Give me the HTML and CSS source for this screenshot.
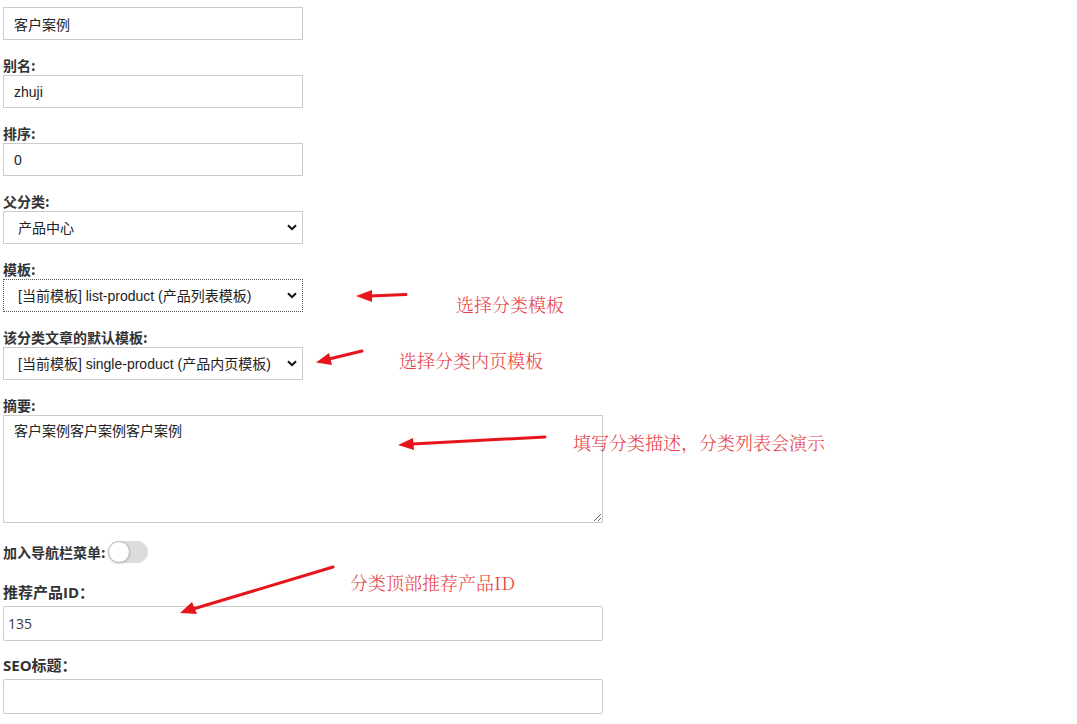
FILE: index.html
```html
<!DOCTYPE html>
<html lang="zh">
<head>
<meta charset="utf-8">
<link rel="stylesheet" href="styles.css">
</head>
<body>
<div class="page">
  <form class="form">
    <input class="field" type="text" value="客户案例">
    <label class="lbl">别名:</label>
    <input class="field" type="text" value="zhuji">
    <label class="lbl">排序:</label>
    <input class="field" type="text" value="0">
    <label class="lbl">父分类:</label>
    <div class="sel-wrap">
      <select class="sel"><option>产品中心</option></select>
      <svg class="chev" width="10" height="7" viewBox="0 0 10 7"><path d="M1 1.2 L5 5.2 L9 1.2" fill="none" stroke="#111" stroke-width="2"/></svg>
    </div>
    <label class="lbl">模板:</label>
    <div class="sel-wrap">
      <select class="sel focus"><option>[当前模板] list-product (产品列表模板)</option></select>
      <svg class="chev" width="10" height="7" viewBox="0 0 10 7"><path d="M1 1.2 L5 5.2 L9 1.2" fill="none" stroke="#111" stroke-width="2"/></svg>
    </div>
    <label class="lbl">该分类文章的默认模板:</label>
    <div class="sel-wrap">
      <select class="sel"><option>[当前模板] single-product (产品内页模板)</option></select>
      <svg class="chev" width="10" height="7" viewBox="0 0 10 7"><path d="M1 1.2 L5 5.2 L9 1.2" fill="none" stroke="#111" stroke-width="2"/></svg>
    </div>
    <label class="lbl">摘要:</label>
    <textarea class="area">客户案例客户案例客户案例</textarea>
    <div class="toggle-row">
      <span class="lbl inline">加入导航栏菜单:</span>
      <span class="toggle"><span class="knob"></span></span>
    </div>
    <label class="lbl2">推荐产品ID：</label>
    <input class="field2" type="text" value="135">
    <label class="lbl2">SEO标题：</label>
    <input class="field2" type="text" value="">
  </form>

  <div class="note n1">选择分类模板</div>
  <div class="note n2">选择分类内页模板</div>
  <div class="note n3">填写分类描述，分类列表会演示</div>
  <div class="note n4">分类顶部推荐产品ID</div>

  <svg class="arrows" width="1077" height="724" viewBox="0 0 1077 724">
    <g stroke="#e8141b" stroke-width="3" fill="#e8141b" stroke-linecap="round">
      <line x1="406" y1="294.5" x2="370" y2="296"/>
      <polygon points="356,296 372,290 372,302" stroke="none"/>
      <line x1="362" y1="351" x2="329" y2="359"/>
      <polygon points="316,362.5 329,353 332,365" stroke="none"/>
      <line x1="545" y1="437" x2="412" y2="444"/>
      <polygon points="398,445 413,438 414,450" stroke="none"/>
      <line x1="333" y1="567" x2="193" y2="609"/>
      <polygon points="180,613 192,602 197,614" stroke="none"/>
    </g>
  </svg>
</div>
</body>
</html>
```

FILE: styles.css
```css
html, body {
  margin: 0;
  padding: 0;
  background: #fff;
}
.page {
  position: relative;
  width: 1077px;
  height: 724px;
  overflow: hidden;
  font-family: "Noto Sans CJK SC", "Liberation Sans", sans-serif;
  color: #222;
}
.form {
  display: flex;
  flex-direction: column;
  align-items: flex-start;
  padding: 7px 0 0 3px;
}
.field {
  box-sizing: border-box;
  width: 300px;
  height: 33px;
  margin: 0 0 16px 0;
  padding: 0 10px;
  border: 1px solid #cbcbcb;
  font-family: "Liberation Sans", "Noto Sans CJK SC", sans-serif;
  font-size: 14px;
  color: #222;
  background: #fff;
  outline: none;
}
.lbl {
  display: block;
  height: 19px;
  line-height: 19px;
  font-size: 14px;
  font-weight: 700;
  color: #333;
}
.lbl.inline {
  display: inline-block;
  height: auto;
  margin-right: 2px;
}
.sel-wrap {
  position: relative;
  width: 300px;
  height: 33px;
  margin: 0 0 16px 0;
}
.sel {
  box-sizing: border-box;
  width: 300px;
  height: 33px;
  margin: 0;
  padding: 0 0 0 14px;
  border: 1px solid #cbcbcb;
  background: #fff;
  font-family: "Liberation Sans", "Noto Sans CJK SC", sans-serif;
  font-size: 14px;
  color: #222;
  appearance: none;
  -webkit-appearance: none;
  border-radius: 0;
  outline: none;
}
.sel.focus {
  border: 1px dotted #555;
}
.chev {
  position: absolute;
  right: 6px;
  top: 13px;
}
.area {
  box-sizing: border-box;
  width: 600px;
  height: 108px;
  margin: 0;
  padding: 5px 10px;
  border: 1px solid #cbcbcb;
  font-family: "Noto Sans CJK SC", sans-serif;
  font-size: 14px;
  line-height: 18px;
  color: #222;
  resize: both;
  outline: none;
}
.toggle-row {
  display: flex;
  align-items: center;
  height: 22px;
  margin: 18px 0 0 0;
}
.toggle {
  position: relative;
  display: inline-block;
  width: 40px;
  height: 22px;
  border-radius: 11px;
  background: #dcdcdc;
}
.knob {
  position: absolute;
  left: 0;
  top: 0;
  box-sizing: border-box;
  width: 22px;
  height: 22px;
  border-radius: 50%;
  background: #fff;
  border: 1px solid #bdbdbd;
  box-shadow: 0 1px 2px rgba(0,0,0,0.15);
}
.lbl2 {
  display: block;
  margin-top: 19px;
  height: 21px;
  line-height: 21px;
  font-family: "Open Sans", "Noto Sans CJK SC", sans-serif;
  font-size: 15px;
  font-weight: 700;
  color: #333;
}
.field2 {
  box-sizing: border-box;
  width: 600px;
  height: 35px;
  margin: 3px 0 0 0;
  padding: 0 4px;
  border: 1px solid #cbcbcb;
  border-radius: 2px;
  font-family: "Open Sans", sans-serif;
  font-weight: 400;
  font-size: 14px;
  color: #3a3a3a;
  outline: none;
}
.field2 + .lbl2 { margin-top: 14px; }
.note {
  position: absolute;
  font-family: "Noto Serif CJK SC", "Liberation Serif", "Noto Sans CJK SC", serif;
  font-weight: 300;
  font-size: 18px;
  line-height: 20px;
  color: #e83a3f;
  white-space: nowrap;
}
.n1 { left: 456px; top: 294px; }
.n2 { left: 399px; top: 350px; }
.n3 { left: 573px; top: 432px; }
.n4 { left: 350px; top: 572px; }
.arrows {
  position: absolute;
  left: 0;
  top: 0;
  pointer-events: none;
}
```
